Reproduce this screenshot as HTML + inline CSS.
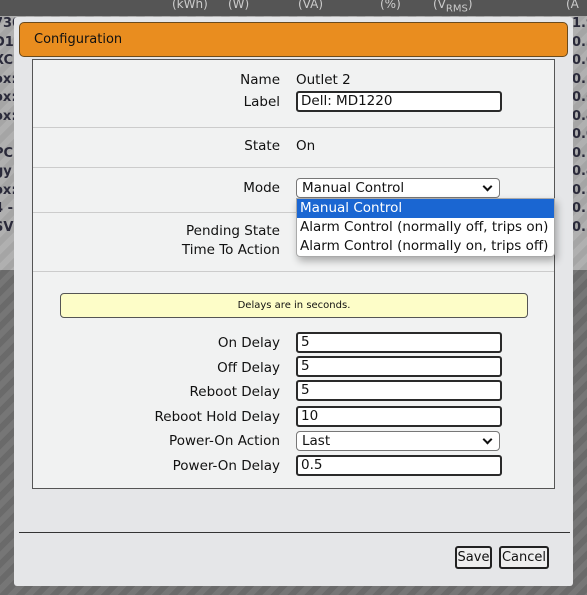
<!DOCTYPE html>
<html><head><style>
*{box-sizing:border-box;margin:0;padding:0}
body{width:587px;height:595px;overflow:hidden;position:relative;font-family:"DejaVu Sans","Liberation Sans",sans-serif;font-size:13.5px;color:#111;
background:repeating-linear-gradient(135deg,#6a6a6a 0 6px,#767676 6px 12px)}
.a{position:absolute}
.top{left:0;top:0;width:587px;height:270px;background:repeating-linear-gradient(135deg,#a5a5a5 0 6px,#b0b0b0 6px 12px)}
.hd{left:0;top:0;width:587px;height:16px;background:#555;color:#ccc;font-size:12px}
.bg{color:#2a2a3a;font-size:13px;font-weight:bold}
.dlg{left:14px;top:17px;width:559px;height:569px;background:#e5e6e8;border-radius:3px}
.head{left:19px;top:22px;width:549px;height:35px;background:#e98d1f;border:1px solid #6b4a1c;border-radius:5px;padding:9px 14px;font-size:13px}
.panel{left:32px;top:59px;width:523px;height:430px;background:#f1f2f2;border:1px solid #555}
.lbl{width:260px;left:20px;text-align:right}
.v{left:296px}
.in{left:296px;width:206px;height:21px;border:2px solid #2a2a2a;border-radius:3px;background:#fff;padding:0 3px;line-height:17px}
.sel{left:296px;width:204px;height:20px;border:1px solid #777;border-radius:4px;background:#fff;padding:0 5px;line-height:18px}
.sel:after{content:"";position:absolute;right:8px;top:4px;width:5px;height:5px;border-right:2px solid #111;border-bottom:2px solid #111;transform:rotate(45deg)}
.hr{left:33px;width:521px;height:1px;background:#ccc}
.btn{top:546px;height:23px;border:2px solid #222;border-radius:3px;background:#eee;text-align:center;line-height:19px;font-size:13px}
</style></head><body>
<div class="a top"></div>
<div class="a hd"><span class="a" style="left:172px;top:-3px">(kWh)</span><span class="a" style="left:228px;top:-3px">(W)</span><span class="a" style="left:298px;top:-3px">(VA)</span><span class="a" style="left:380px;top:-3px">(%)</span><span class="a" style="left:433px;top:-3px">(V<sub>RMS</sub>)</span><span class="a" style="left:566px;top:-3px">(A</span></div>
<div class="a bg" style="left:-6px;top:15px;line-height:18.5px">730<br>D1<br>XC<br>ox:<br>ox:<br>ox:<br>&#8217;<br>PC<br>gy<br>ox:<br>4 -<br>SV</div>
<div class="a bg" style="left:572px;top:15px;line-height:18.5px">1.9<br>0.3<br>0.0<br>0.2<br>0.6<br>0.4<br>0.0<br>0.5<br>0.4<br>0.3<br>0.1<br>0.1</div>
<div class="a dlg"></div>
<div class="a head">Configuration</div>
<div class="a panel"></div>
<div class="a lbl" style="top:72px">Name</div><div class="a v" style="top:72px">Outlet 2</div>
<div class="a lbl" style="top:94px">Label</div><div class="a in" style="top:91px">Dell: MD1220</div>
<div class="a hr" style="top:127px"></div>
<div class="a lbl" style="top:138px">State</div><div class="a v" style="top:138px">On</div>
<div class="a hr" style="top:167px"></div>
<div class="a lbl" style="top:180px">Mode</div><div class="a sel" style="top:178px">Manual Control</div>
<div class="a hr" style="top:212px"></div>
<div class="a lbl" style="top:223px">Pending State</div>
<div class="a lbl" style="top:242px">Time To Action</div>
<div class="a hr" style="top:271px"></div>
<div class="a" style="left:296px;top:198px;width:259px;height:59px;background:#fff;border:1px solid #aaa;border-radius:0 0 4px 4px;box-shadow:2px 4px 8px rgba(0,0,0,.3);line-height:19px">
<div style="background:#1a66d2;color:#fff;padding-left:3px">Manual Control</div>
<div style="padding-left:3px;white-space:nowrap">Alarm Control (normally off, trips on)</div>
<div style="padding-left:3px;white-space:nowrap">Alarm Control (normally on, trips off)</div></div>
<div class="a" style="left:60px;top:293px;width:468px;height:25px;background:#fdfdc8;border:1px solid #555;border-radius:4px;text-align:center;font-size:10px;line-height:23px">Delays are in seconds.</div>
<div class="a lbl" style="top:335px">On Delay</div><div class="a in" style="top:332px">5</div>
<div class="a lbl" style="top:360px">Off Delay</div><div class="a in" style="top:356px">5</div>
<div class="a lbl" style="top:384px">Reboot Delay</div><div class="a in" style="top:380px">5</div>
<div class="a lbl" style="top:409px">Reboot Hold Delay</div><div class="a in" style="top:406px">10</div>
<div class="a lbl" style="top:433px">Power-On Action</div><div class="a sel" style="top:431px">Last</div>
<div class="a lbl" style="top:458px">Power-On Delay</div><div class="a in" style="top:455px">0.5</div>
<div class="a" style="left:19px;top:532px;width:551px;height:1px;background:#333"></div>
<div class="a btn" style="left:455px;width:37px">Save</div>
<div class="a btn" style="left:499px;width:50px">Cancel</div>
</body></html>
